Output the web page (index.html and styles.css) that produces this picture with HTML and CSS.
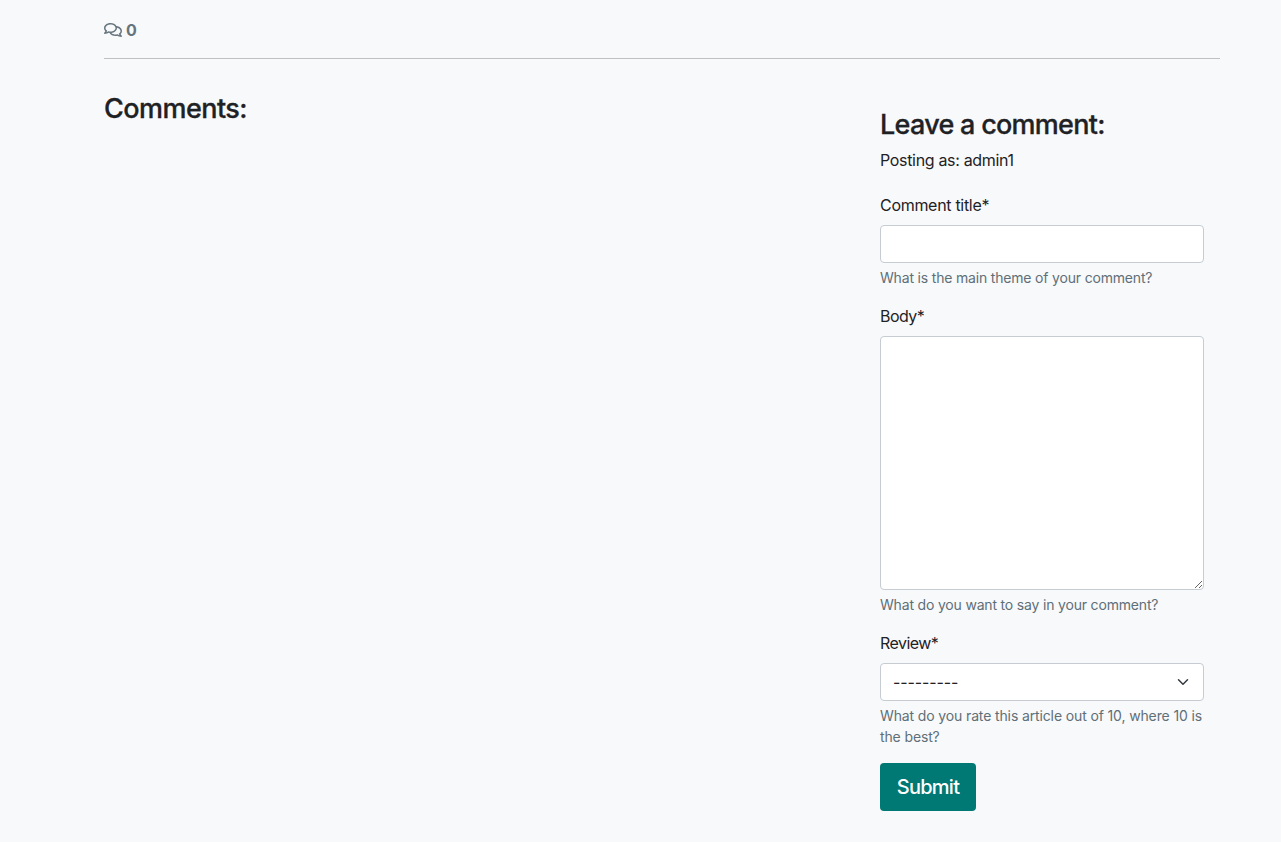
FILE: index.html
```html
<!DOCTYPE html>
<html lang="en">
<head>
<meta charset="utf-8">
<title>Comments</title>
<link rel="stylesheet" href="styles.css">
</head>
<body>
<main class="container">
  <div class="comment-count">
    <svg class="icon" viewBox="0 0 576 512" aria-hidden="true"><path fill="currentColor" d="M532 386.2c27.5-27.1 44-61.1 44-98.2 0-80-76.5-146.1-176.2-157.9C368.3 72.5 294.3 32 208 32 93.1 32 0 103.6 0 192c0 37 16.5 71 44 98.2-15.3 30.7-37.3 54.5-37.7 54.9-6.3 6.7-8.1 16.5-4.4 25 3.6 8.5 12 14 21.2 14 53.5 0 96.7-20.2 125.2-38.8 9.2 2.1 18.7 3.7 28.4 4.9C208.1 407.6 281.8 448 368 448c20.8 0 40.8-2.4 59.8-6.8C456.3 459.7 499.4 480 553 480c9.2 0 17.5-5.5 21.2-14 3.6-8.5 1.9-18.3-4.4-25-.4-.3-22.5-24.1-37.8-54.8zm-392.8-92.3L122.1 305c-14.1 9.1-28.5 16.3-43.1 21.4 2.7-4.7 5.4-9.7 8-14.8l15.5-31.1L77.7 256C64.2 242.6 48 220.7 48 192c0-60.7 73.3-112 160-112s160 51.3 160 112-73.3 112-160 112c-16.5 0-33-1.9-49-5.6l-19.8-4.5zM498.3 352l-24.7 24.4 15.5 31.1c2.6 5.1 5.3 10.1 8 14.8-14.6-5.1-29-12.3-43.1-21.4l-17.1-11.1-19.9 4.6c-16 3.7-32.5 5.6-49 5.6-54 0-102.2-20.1-131.3-49.7C338 339.5 416 272.9 416 192c0-3.4-.4-6.7-.7-10C479.7 196.5 528 238.8 528 288c0 28.7-16.2 50.6-29.7 64z"/></svg>
    <strong>0</strong>
  </div>
  <hr class="divider">
  <div class="row">
    <section class="comments">
      <h3>Comments:</h3>
    </section>
    <section class="comment-form">
      <h3 class="form-title">Leave a comment:</h3>
      <p class="posting">Posting as: admin1</p>
      <form>
        <div class="field">
          <label class="label-title" for="title">Comment title*</label>
          <input class="control" type="text" id="title">
          <div class="help">What is the main theme of your comment?</div>
        </div>
        <div class="field">
          <label for="body">Body*</label>
          <textarea class="control body" id="body"></textarea>
          <div class="help">What do you want to say in your comment?</div>
        </div>
        <div class="field">
          <label for="review">Review*</label>
          <div class="select-wrap">
            <select class="control select" id="review"><option>---------</option></select>
            <svg class="chevron" viewBox="0 0 16 16" aria-hidden="true"><path fill="none" stroke="#343a40" stroke-linecap="round" stroke-linejoin="round" stroke-width="2" d="M2 5l6 6 6-6"/></svg>
          </div>
          <div class="help help-review">What do you rate this article out of 10, where 10 is the best?</div>
        </div>
        <button class="submit" type="button">Submit</button>
      </form>
    </section>
  </div>
</main>
</body>
</html>
```
FILE: styles.css
```css
*, *::before, *::after { box-sizing: border-box; }
body {
  margin: 0;
  background: #f8f9fb;
  color: #1f2225;
  font: 400 16px/1.5 Inter, "Liberation Sans", sans-serif;
}
.container { width: 1116px; margin-left: 104px; padding-top: 18px; }
.comment-count { display: flex; align-items: center; gap: 4px; height: 24px; color: #66757d; }
.comment-count strong { font-weight: 700; }
.icon { width: 18px; height: 16px; }
.divider { height: 1px; margin: 16px 0 33px; border: 0; background: #bfc0c2; }
.row { display: grid; grid-template-columns: 760px 356px; }
h3 { margin: 0 0 8px; font-size: 27px; line-height: 34px; font-weight: 500; letter-spacing: -0.54px; -webkit-text-stroke: 0.3px currentColor; }
.form-title { letter-spacing: -0.72px; }
.comment-form { padding: 16px; }
.posting { height: 24px; margin: -2px 0 21px; letter-spacing: -0.33px; }
.field { margin-bottom: 16px; }
label { display: block; margin-bottom: 8px; letter-spacing: -0.55px; }
.label-title { letter-spacing: -0.3px; }
.control {
  display: block;
  width: 100%;
  height: 38px;
  margin: 0;
  padding: 6px 12px;
  border: 1px solid #c6ccd2;
  border-radius: 4px;
  background: #fff;
  color: #1f2225;
  font: inherit;
}
.body { height: 254px; resize: vertical; }
.select-wrap { position: relative; }
.select { appearance: none; padding-right: 36px; letter-spacing: -0.1px; }
.chevron { position: absolute; top: 13px; right: 15px; width: 12px; height: 12px; pointer-events: none; }
.help { margin-top: 4px; color: #606f77; font-size: 14px; line-height: 21px; letter-spacing: -0.18px; }
.help-review { letter-spacing: -0.13px; }
.submit {
  width: 96px;
  height: 48px;
  padding: 0;
  border: 0;
  border-radius: 4px;
  background: #007874;
  color: #fff;
  font: 500 20px/30px Inter, "Liberation Sans", sans-serif;
  letter-spacing: -0.75px;
}
```
